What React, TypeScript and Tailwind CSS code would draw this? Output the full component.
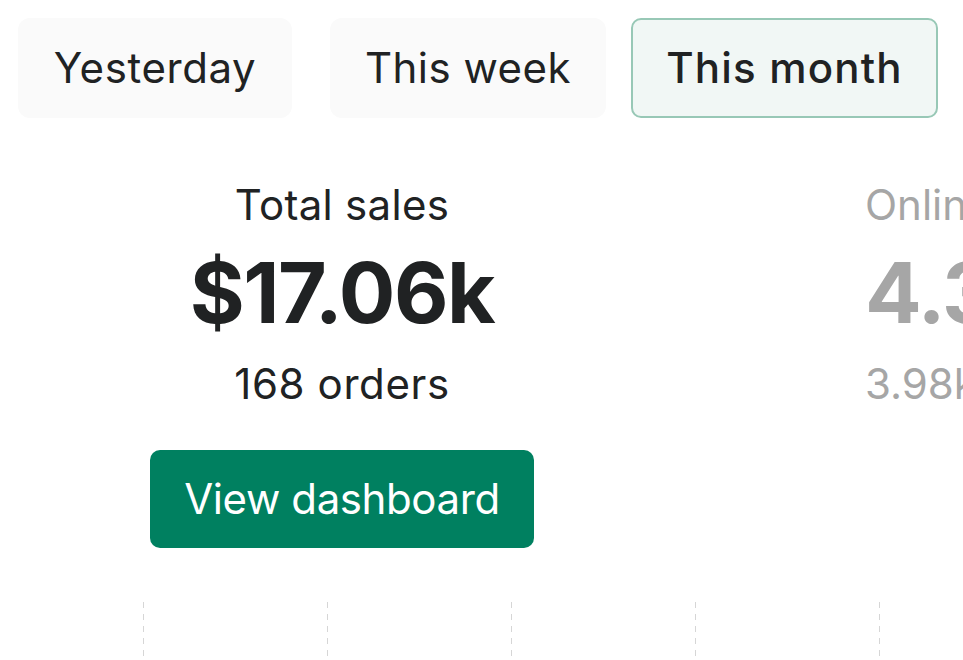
import React from 'react';

const font = { fontFamily: 'Inter, "Noto Sans", sans-serif' };

export default function App() {
  const gridLines = [0, 1, 2, 3, 4];

  return (
    <div className="w-[963px] h-[660px] overflow-hidden bg-white text-[#202223]" style={font}>
      {/* Period pills */}
      <div className="flex items-start pl-[18px] pt-[18px]">
        <button className="w-[274px] h-[100px] rounded-[12px] bg-[#fafafa] text-[42px] leading-[50px] tracking-[0.6px] whitespace-nowrap">
          Yesterday
        </button>
        <button className="ml-[38px] w-[276px] h-[100px] rounded-[12px] bg-[#fafafa] text-[42px] leading-[50px] tracking-[0.5px] whitespace-nowrap">
          This week
        </button>
        <button className="ml-[25px] w-[307px] h-[100px] rounded-[10px] bg-[#f1f7f5] border-2 border-[#98c8b6] text-[42px] leading-[50px] font-medium tracking-[1.2px] whitespace-nowrap">
          This month
        </button>
      </div>

      {/* Metrics carousel */}
      <div className="flex mt-[62px] whitespace-nowrap">
        <div className="w-[684px] shrink-0 flex flex-col items-center">
          <div className="text-[42px] leading-[50px] tracking-[0.3px]">Total sales</div>
          <div className="mt-[13px] text-[84px] leading-[100px] font-bold tracking-[-1.5px]">$17.06k</div>
          <div className="mt-[16px] text-[42px] leading-[50px] tracking-[0.6px]">168 orders</div>
          <button className="mt-[41px] h-[98px] w-[384px] rounded-[10px] bg-[#008060] text-white text-[42px] leading-[50px] tracking-[-0.4px]">
            View dashboard
          </button>
        </div>
        <div className="pl-[181px] shrink-0 flex flex-col items-start text-[#a6a6a6]">
          <div className="text-[42px] leading-[50px]">Online store sessions</div>
          <div className="mt-[13px] text-[84px] leading-[100px] font-bold tracking-[-1.5px]">4.36k</div>
          <div className="mt-[16px] text-[42px] leading-[50px]">3.98k visitors</div>
        </div>
      </div>

      {/* Chart grid */}
      <div className="flex mt-[54px] pl-[143px] gap-[183px]">
        {gridLines.map((i) => (
          <div
            key={i}
            className="w-px h-[60px] shrink-0 bg-[repeating-linear-gradient(to_bottom,#d6d6d6_0px,#d6d6d6_6px,transparent_6px,transparent_12px)]"
          />
        ))}
      </div>
    </div>
  );
}
